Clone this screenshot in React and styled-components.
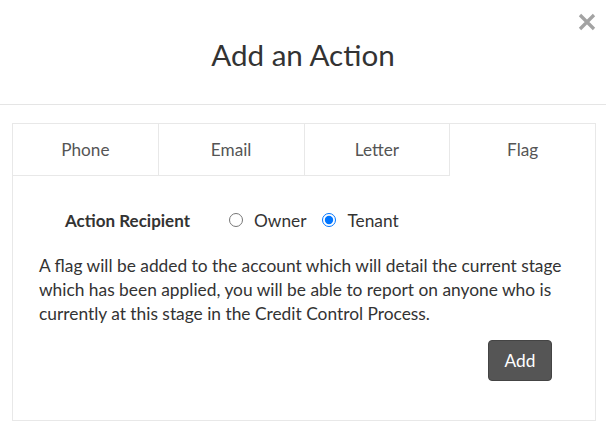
import React, { useState } from "react";
import styled, { createGlobalStyle } from "styled-components";

const Global = createGlobalStyle`
  html, body { margin: 0; padding: 0; background: #fff; }
  body { font-family: Lato, "Open Sans", sans-serif; color: #333; }
  * { box-sizing: border-box; }
`;

const Modal = styled.div`
  position: relative;
  width: 606px;
  height: 430px;
  background: #fff;
`;

const Header = styled.div`
  height: 105px;
  border-bottom: 1px solid #e5e5e5;
  display: flex;
  align-items: center;
  justify-content: center;
  padding-top: 6px;
`;

const Title = styled.h2`
  margin: 0;
  font-size: 29.6px;
  font-weight: 400;
  color: #333;
  line-height: 1.1;
`;

const Close = styled.button`
  position: absolute;
  top: 13px;
  right: 10px;
  width: 18px;
  height: 18px;
  padding: 0;
  border: 0;
  background: none;
  cursor: pointer;
  display: flex;
`;

const Body = styled.div`
  padding: 18px 10px 0 12px;
`;

const Panel = styled.div`
  border: 1px solid #e8e8e8;
  height: 298px;
  display: flex;
  flex-direction: column;
`;

const Tabs = styled.div`
  display: flex;
  height: 52px;
`;

const Tab = styled.div`
  flex: 1;
  display: flex;
  align-items: center;
  justify-content: center;
  font-size: 17.2px;
  color: #555;
  border-right: ${(p) => (p.$last ? "0" : "1px solid #e8e8e8")};
  border-bottom: ${(p) => (p.$active ? "0" : "1px solid #e8e8e8")};
  padding-bottom: 1px;
  cursor: pointer;
`;

const Content = styled.div`
  padding: 32px 26px 0 26px;
  display: flex;
  flex-direction: column;
`;

const RecipientRow = styled.div`
  display: flex;
  align-items: center;
  height: 24px;
  padding-left: 26px;
  font-size: 17.3px;
`;

const Label = styled.span`
  font-weight: 700;
  font-size: 17px;
  color: #333;
  margin-right: 37px;
`;

const RadioLabel = styled.label`
  display: flex;
  align-items: center;
  color: #333;
  margin-right: 14px;
  cursor: pointer;
  input {
    margin: 0 11px 0 2px;
    width: 14px;
    height: 14px;
  }
`;

const Text = styled.p`
  margin: 22px 0 0 0;
  font-size: 17.35px;
  line-height: 24px;
  color: #333;
`;

const Actions = styled.div`
  display: flex;
  justify-content: flex-end;
  margin-top: 14px;
  padding-right: 17px;
`;

const AddButton = styled.button`
  width: 64px;
  height: 41px;
  background: #555;
  color: #fff;
  border: 1px solid #444;
  border-radius: 4px;
  font-family: Lato, sans-serif;
  font-size: 17.3px;
  cursor: pointer;
`;

export default function App() {
  const [who, setWho] = useState("tenant");
  const tabs = ["Phone", "Email", "Letter", "Flag"];
  return (
    <>
      <Global />
      <Modal>
        <Header>
          <Title>Add an Action</Title>
        </Header>
        <Close aria-label="Close">
          <svg width="18" height="18" viewBox="0 0 18 18">
            <path d="M2 2 L16 16 M16 2 L2 16" stroke="#a3a3a3" strokeWidth="3.3" strokeLinecap="butt" />
          </svg>
        </Close>
        <Body>
          <Panel>
            <Tabs>
              {tabs.map((t, i) => (
                <Tab key={t} $active={t === "Flag"} $last={i === tabs.length - 1}>
                  {t}
                </Tab>
              ))}
            </Tabs>
            <Content>
              <RecipientRow>
                <Label>Action Recipient</Label>
                <RadioLabel>
                  <input type="radio" name="r" checked={who === "owner"} onChange={() => setWho("owner")} />
                  Owner
                </RadioLabel>
                <RadioLabel>
                  <input type="radio" name="r" checked={who === "tenant"} onChange={() => setWho("tenant")} />
                  Tenant
                </RadioLabel>
              </RecipientRow>
              <Text>
                A flag will be added to the account which will detail the current stage which has been applied, you will be able to report on anyone who is currently at this stage in the Credit Control Process.
              </Text>
              <Actions>
                <AddButton>Add</AddButton>
              </Actions>
            </Content>
          </Panel>
        </Body>
      </Modal>
    </>
  );
}
